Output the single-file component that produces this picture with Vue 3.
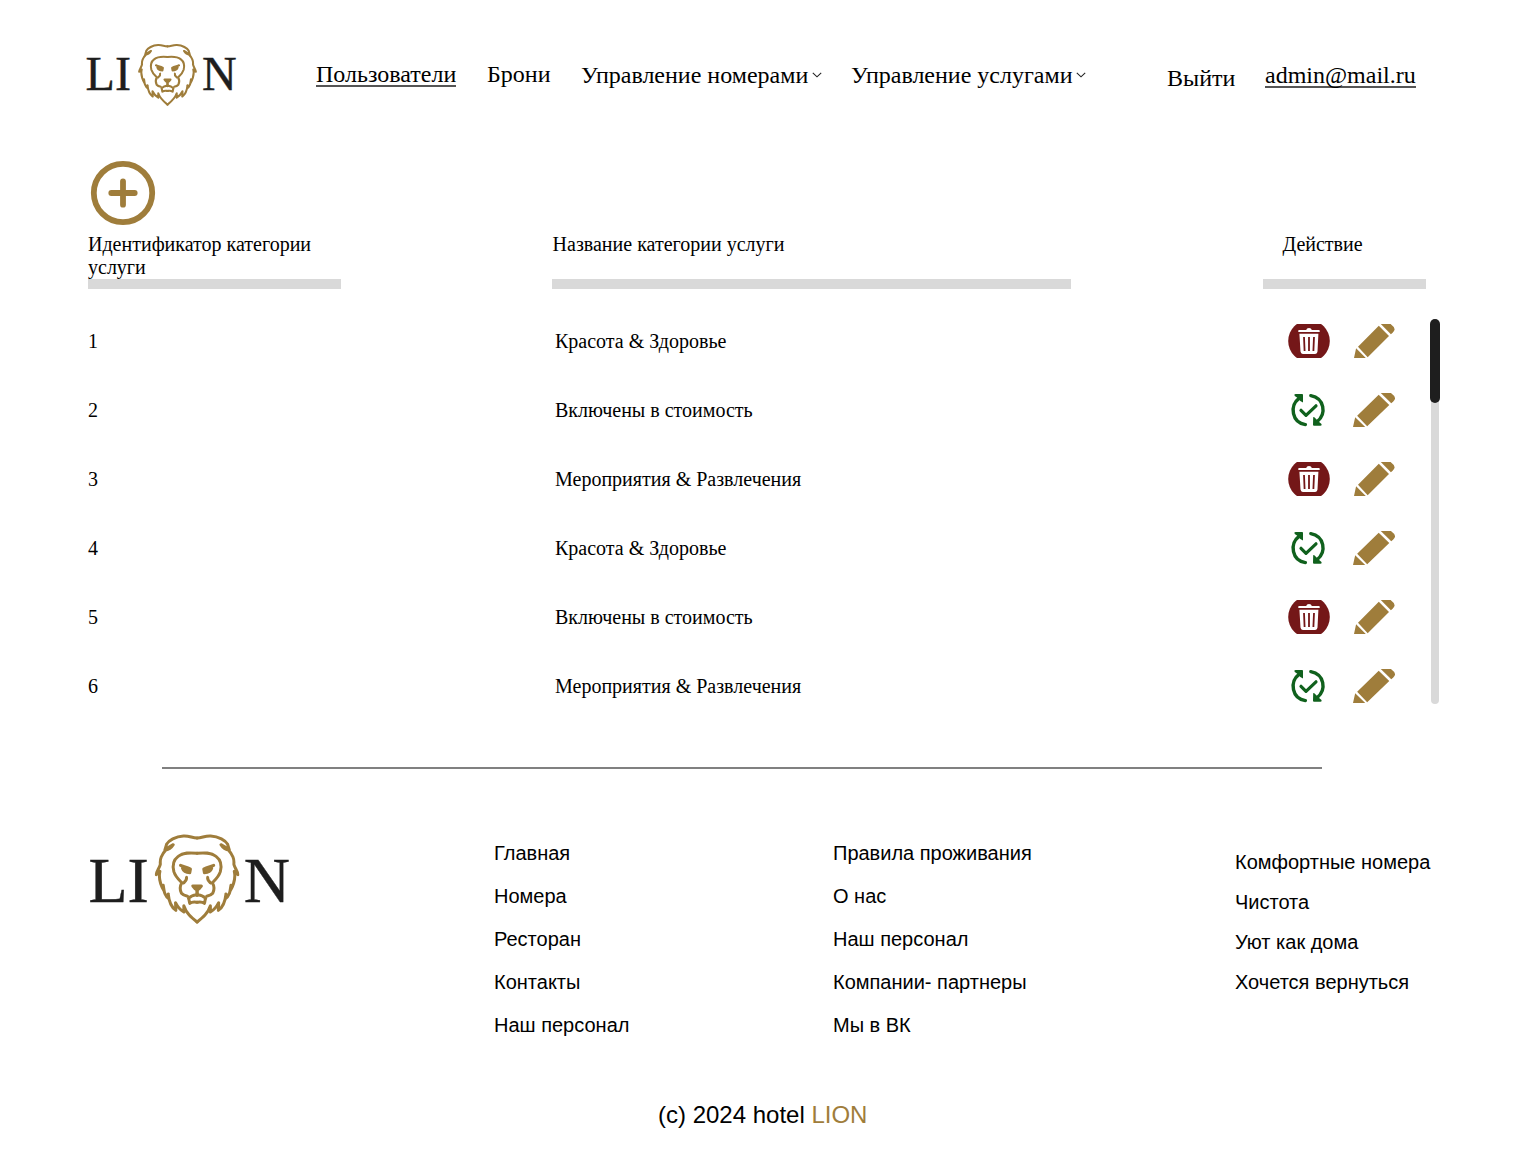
<script setup>
const services = ['Красота & Здоровье', 'Включены в стоимость', 'Мероприятия & Развлечения']
const rows = Array.from({ length: 6 }, (_, i) => ({
  id: i + 1,
  name: services[i % 3],
  removed: i % 2 === 1,
}))
const linksMain = ['Главная', 'Номера', 'Ресторан', 'Контакты', 'Наш персонал']
const linksAbout = ['Правила проживания', 'О нас', 'Наш персонал', 'Компании- партнеры', 'Мы в ВК']
const perks = ['Комфортные номера', 'Чистота', 'Уют как дома', 'Хочется вернуться']
</script>

<template>
  <div class="page">
    <svg class="defs" aria-hidden="true">
      <defs>
        <g id="lion-half">
          <path d="M141 38C126 38 118 31 100 32C76 33 55 46 49 57L44 74C54 73 63 68 69 58C53 66 40 79 33 95C28 107 31 114 30 118C27 129 19 137 18 148L29 138C25 155 28 174 42 198L39 180C40 204 46 213 56 220L54 206C57 235 65 247 77 255L76 232C83 246 90 254 101 260L101 241C109 265 123 276 141 290" />
          <path d="M141 84C119 82 99 81 84 93C68 105 67 124 71 139C76 155 86 163 95 172C89 182 90 196 94 204C99 210 107 212 112 213" />
          <path d="M109 156C111 164 105 168 100 173" />
          <path d="M91 120C100 124 111 125 121 131L119 142C109 142 100 138 97 129M98 126L116 135" />
          <path d="M141 197V210C131 206 121 214 115 219C118 224 117 230 119 234C128 228 134 230 141 231" />
        </g>
        <symbol id="lion" viewBox="13 26 256 270" preserveAspectRatio="none">
          <g fill="none" stroke="#9f7d3b" stroke-width="9" stroke-linecap="round" stroke-linejoin="round">
            <use href="#lion-half" />
            <use href="#lion-half" transform="matrix(-1 0 0 1 282 0)" />
            <path d="M128 182H154L147 190L141 194L135 190Z" fill="#9f7d3b" />
          </g>
        </symbol>
      </defs>
    </svg>

    <header class="header">
      <svg class="logo" width="152" height="66" viewBox="0 0 152 66">
        <text x="-.4" y="48" font-size="48">LI</text>
        <use href="#lion" x="52" y="1.6" width="59" height="62.4" />
        <text x="116" y="48" font-size="48">N</text>
      </svg>
      <nav class="nav">
        <a class="link users">Пользователи</a>
        <a class="link book">Брони</a>
        <a class="link rooms">Управление номерами<svg class="chev" width="10" height="6" viewBox="0 0 10 6"><path d="M.8 .8L5 4.8L9.2 .8" /></svg></a>
        <a class="link serv">Управление услугами<svg class="chev" width="10" height="6" viewBox="0 0 10 6"><path d="M.8 .8L5 4.8L9.2 .8" /></svg></a>
      </nav>
      <a class="link exit">Выйти</a>
      <a class="link mail">admin@mail.ru</a>
    </header>

    <main class="main">
      <svg class="add" width="66" height="66" viewBox="0 0 66 66">
        <circle cx="33" cy="33" r="29.2" />
        <path d="M33 21.3V44.7M21.3 33H44.7" />
      </svg>
      <div class="grid head">
        <div class="th">Идентификатор категории услуги</div>
        <div class="th title">Название категории услуги</div>
        <div class="th act">Действие</div>
      </div>
      <div class="body">
        <div class="rows">
          <div v-for="r in rows" :key="r.id" class="grid row">
            <span>{{ r.id }}</span>
            <span>{{ r.name }}</span>
            <span class="icons">
              <svg v-if="!r.removed" width="42" height="34" viewBox="0 0 42 34">
                <circle cx="21" cy="17" r="20.8" fill="#741718" />
                <path fill="#fff" d="M10.3 6.6Q10.3 6 11 6H18.2Q18.6 4 21 4T23.8 6H31Q31.7 6 31.7 6.7V8H10.3Z" />
                <path fill="#fff" d="M11.4 9.8H30.4L29.5 27.6Q29.4 30 27.2 30H14.8Q12.7 30 12.5 27.6Z" />
                <path class="slits" d="M16 13L16.6 27M21 13V27M26 13L25.4 27" />
              </svg>
              <svg v-else width="42" height="34" viewBox="0 0 42 34">
                <g class="restore">
                  <path d="M17.4 31.6C4 29.5 1.2 13 11 5.4" />
                  <path d="M22.8 2.6C36.2 5.2 39 20.5 29 28.8" />
                  <path class="check" d="M13 17.3L18 22.3L28 12.8" />
                </g>
                <path fill="#10611d" d="M6.3 1.8Q6.7 1 7.8 1H14.2Q15 1 15 2V9.6L12.3 8L9.6 5L6.8 3ZM25.2 24.2Q26 23.8 26.6 24.4L30.5 28.6L33.5 31Q34.2 32.6 32.5 32.8H26Q25 32.8 25 31.8Z" />
              </svg>
              <svg class="pen" :class="{ wide: r.removed }" width="41" height="34" viewBox="0 0 41 34" preserveAspectRatio="none">
                <path fill="#9f7d3b" d="M0 34L2.1 24.3L11.8 34ZM4 22.7L24.8 1.8L35 12L13.7 33.2ZM26.8 0H36.6Q40 2.5 40.6 5.2Q40.9 6.6 36.9 10.3Z" />
              </svg>
            </span>
          </div>
        </div>
        <div class="scroll"><div class="thumb"></div></div>
      </div>
    </main>

    <hr class="rule" />

    <footer class="footer">
      <svg class="flogo" width="203" height="94" viewBox="0 0 203 94">
        <text x=".4" y="69.9" font-size="64">LI</text>
        <use href="#lion" x="66.6" y="2" width="85" height="90" />
        <text x="155.8" y="69.9" font-size="64">N</text>
      </svg>
      <ul class="list c1"><li v-for="t in linksMain" :key="t">{{ t }}</li></ul>
      <ul class="list c2"><li v-for="t in linksAbout" :key="t">{{ t }}</li></ul>
      <ul class="list c3"><li v-for="t in perks" :key="t">{{ t }}</li></ul>
    </footer>
    <p class="copy">(c) 2024 hotel <span>LION</span></p>
  </div>
</template>

<style>
body { margin: 0; background: #fff; }
</style>

<style scoped>
.page { width: 1520px; height: 1173px; overflow: hidden; color: #000; font-family: "Liberation Serif", "Times New Roman", serif; font-size: 20px; line-height: 23px; }
.defs { display: block; width: 0; height: 0; }
.logo, .flogo { flex: none; overflow: visible; fill: #1e1e1e; stroke: #1e1e1e; stroke-width: .4; }
.header { display: flex; align-items: flex-start; height: 118px; padding: 42px 0 0 85.5px; box-sizing: border-box; }
.nav { display: flex; margin-left: 78.5px; }
.link { display: block; font-size: 24px; line-height: 28px; white-space: nowrap; flex: none; }
.users { width: 140px; margin-top: 18px; height: 25px; border-bottom: 2px solid #555; }
.book { margin: 18px 0 0 31px; width: 63px; }
.rooms { margin: 19px 0 0 31px; width: 240px; }
.serv { margin: 19px 0 0 30px; width: 235px; }
.chev { margin-left: 3.5px; vertical-align: 5px; overflow: visible; fill: none; stroke: #222; stroke-width: 1.1; }
.exit { margin: 22px 0 0 81px; width: 68px; }
.mail { margin: 19px 0 0 30px; width: 151px; height: 25px; border-bottom: 2px solid #555; }
.main { padding: 42px 80px 0 88px; }
.add { display: block; margin: 0 0 7px 2px; fill: none; stroke: #9f7d3b; stroke-width: 5.8; stroke-linecap: round; }
.grid { display: grid; justify-content: start; }
.head { grid-template-columns: 464px 711px 163px; }
.row { grid-template-columns: 467px 733px 108px; height: 69px; align-items: center; }
.th { height: 46px; border-bottom: 10px solid #d9d9d9; }
.th:nth-child(1) { width: 253px; }
.title { width: 519px; text-indent: .6px; }
.act { padding-left: 19.5px; }
.body { display: flex; margin-top: 18px; height: 414px; }
.rows { width: 1342px; }
.icons { display: flex; gap: 24px; height: 34px; margin-bottom: 1px; }
.pen { width: 41px; }
.pen.wide { width: 42.5px; margin-left: -1px; }
.slits { fill: none; stroke: #741718; stroke-width: 1.8; }
.restore { fill: none; stroke: #10611d; stroke-width: 3.4; stroke-linecap: round; stroke-linejoin: round; }
.check { stroke-width: 3.2; }
.scroll { width: 8px; height: 385px; margin: 12px 0 0 1px; border-radius: 4px; background: #d9d9d9; }
.thumb { width: 10px; height: 84px; margin-left: -1px; border-radius: 5px; background: #1e1e1e; }
.rule { width: 1160px; height: 2px; margin: 46px 0 0 162px; border: 0; background: #808080; }
.footer { display: flex; align-items: flex-start; height: 280px; padding: 63px 0 0 88px; font-family: "Liberation Sans", Arial, sans-serif; box-sizing: border-box; }
.flogo { font-family: "Liberation Serif", serif; }
.list { list-style: none; margin: 0; padding: 0; white-space: nowrap; flex: none; }
.list li { height: 43px; }
.c1 { width: 339px; margin: 10px 0 0 203px; }
.c2 { width: 402px; margin-top: 10px; }
.c3 { margin-top: 19px; }
.c3 li { height: 40px; }
.copy { margin: 52px 0 0 658px; font: 24px/28px "Liberation Sans", Arial, sans-serif; }
.copy span { color: #9f7d3b; }
</style>
